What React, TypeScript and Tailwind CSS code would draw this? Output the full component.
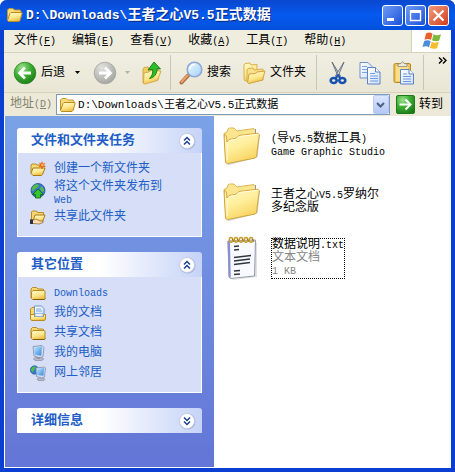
import { useState, type ReactNode } from 'react'

const PATH = 'D:\\Downloads\\王者之心V5.5正式数据'

const menus = [
  { label: '文件', key: 'F' },
  { label: '编辑', key: 'E' },
  { label: '查看', key: 'V' },
  { label: '收藏', key: 'A' },
  { label: '工具', key: 'T' },
  { label: '帮助', key: 'H' },
]

// Latin runs are set a little smaller so they take half the width of a Chinese glyph
function Mixed({ text, latin = 'text-[10px]' }: { text: string; latin?: string }) {
  return (
    <>
      {text.split(/([\x20-\x7e]+)/).filter(Boolean).map((run, i) =>
        /^[\x20-\x7e]+$/.test(run) ? <span key={i} className={latin}>{run}</span> : run
      )}
    </>
  )
}

function Gradients() {
  return (
    <svg width="0" height="0" className="absolute" aria-hidden="true">
      <defs>
        <linearGradient id="folder" x1="0" y1="0" x2="0.4" y2="1">
          <stop offset="0" stopColor="#fffbd0" />
          <stop offset="0.6" stopColor="#fde88c" />
          <stop offset="1" stopColor="#eec048" />
        </linearGradient>
        <linearGradient id="bigFolder" x1="0" y1="0" x2="0.5" y2="1">
          <stop offset="0" stopColor="#fff6b8" />
          <stop offset="0.5" stopColor="#ffef9e" />
          <stop offset="1" stopColor="#f8d460" />
        </linearGradient>
        <radialGradient id="green" cx="0.35" cy="0.25" r="0.8">
          <stop offset="0" stopColor="#9be08c" />
          <stop offset="0.5" stopColor="#3fae34" />
          <stop offset="1" stopColor="#1b7d18" />
        </radialGradient>
        <radialGradient id="gray" cx="0.35" cy="0.25" r="0.8">
          <stop offset="0" stopColor="#e2e2df" />
          <stop offset="1" stopColor="#a3a3a0" />
        </radialGradient>
        <linearGradient id="lens" x1="0" y1="0" x2="1" y2="1">
          <stop offset="0" stopColor="#f2fbff" />
          <stop offset="1" stopColor="#9fd0f5" />
        </linearGradient>
        <linearGradient id="screen" x1="0" y1="0" x2="1" y2="1">
          <stop offset="0" stopColor="#bfeaff" />
          <stop offset="1" stopColor="#2f86e0" />
        </linearGradient>
        <linearGradient id="paper" x1="0" y1="0" x2="1" y2="1">
          <stop offset="0" stopColor="#ffffff" />
          <stop offset="1" stopColor="#cfdffa" />
        </linearGradient>
      </defs>
    </svg>
  )
}

function SmallFolder() {
  return (
    <svg width="16" height="16" viewBox="0 0 16 16" className="shrink-0">
      <path d="M1 13V4l1.500-1.500h4L8 4h5l1 1v3" fill="#f6d873" stroke="#b98a1e" />
      <path d="M1.500 13.500V7L3 5.500h11l1 1v7l-1 1H2.500z" fill="url(#folder)" stroke="#b98a1e" />
      <path d="M3 14.500h11.500l1-1" fill="none" stroke="#7d5c12" />
    </svg>
  )
}

// Larger folder of the title and address bars
function PathFolder() {
  return (
    <svg width="17" height="16" viewBox="0 0 17 16" className="shrink-0">
      <path d="M1.500 13V3L3 1.500h4L8.500 3H14l1 1.500V7" fill="#f8dc7a" stroke="#c3962c" />
      <path d="M1.500 13.500 4 6.500 5 5.500h11V7l-2 6.500-1 1H2.500z" fill="url(#folder)" stroke="#b98a1e" />
    </svg>
  )
}

function NewFolderIcon() {
  return (
    <svg width="16" height="16" viewBox="0 0 16 16" className="shrink-0">
      <path d="M1 12V4l1-1h4l1 1h5v3" fill="#f6d873" stroke="#b98a1e" />
      <path d="M1 12.500 3 7h12l-2.500 6.500-1 1H3z" fill="url(#folder)" stroke="#a87a18" />
      <path d="M12 0l1 2.500L15.500 2 14 4l2 2-2.500 0L12 8.500 11 6 8.500 6 10 4 9 1.500l2 1z" fill="#f0641e" />
      <circle cx="12.300" cy="4" r="1.300" fill="#ffc04a" />
    </svg>
  )
}

function PublishIcon() {
  return (
    <svg width="16" height="16" viewBox="0 0 16 16" className="mt-0.5 shrink-0">
      <circle cx="8" cy="7.500" r="7" fill="#3a78d0" stroke="#1c4c90" strokeWidth="0.800" />
      <path d="M3 3c2-2 5-2 6-1L8 4 5 6 3 8 1.300 7zM11 3c2 1 3 3 3 5l-2 1-2-3z" fill="#58ba48" />
      <path d="M8 6l5.500 5.500h-3V15h-5v-3.500h-3z" fill="#35c52f" stroke="#126d12" strokeWidth="0.900" />
    </svg>
  )
}

function ShareIcon() {
  return (
    <svg width="16" height="16" viewBox="0 0 16 16" className="shrink-0">
      <path d="M1.500 12V3l1-1h4l1 1.500h6V7" fill="#f6d873" stroke="#b98a1e" />
      <path d="M3 12 5 6h10l-2.500 7H4z" fill="url(#folder)" stroke="#a87a18" />
      <path d="M0 11h4l2-1 4 2 3 0v1.500L9 15 4 14.500H0z" fill="#ffe0b0" stroke="#8a5a20" strokeWidth="0.700" />
      <path d="M0 10.500h3V15H0z" fill="#2c3440" />
    </svg>
  )
}

function MyDocsIcon() {
  return (
    <svg width="16" height="16" viewBox="0 0 16 16" className="shrink-0">
      <path d="M.5 14V4L2 2.500h3V14" fill="#f6d873" stroke="#b98a1e" />
      <path d="M4.500 1h7L14 3.500v7H4.500z" fill="url(#paper)" stroke="#6f93c4" />
      <path d="M6 4h5M6 6h6" stroke="#7fa8dd" />
      <path d="M.500 14V9.500h4v2h9v-2h2V14l-1 1.500h-13z" fill="url(#folder)" stroke="#b98a1e" />
      <path d="M5 8.500h8v3H5z" fill="#e8f2ff" stroke="#7fa8dd" strokeWidth="0.700" />
    </svg>
  )
}

function ComputerIcon() {
  return (
    <svg width="16" height="16" viewBox="0 0 16 16" className="shrink-0">
      <ellipse cx="8.500" cy="14" rx="5" ry="1.700" fill="#b9bccb" stroke="#777c92" strokeWidth="0.600" />
      <path d="M3 1.500 12 .5l2 2-1 9-3 1.500-6-2z" fill="#d5dbea" stroke="#7d8cab" strokeWidth="0.800" />
      <path d="M4 2.500 12 1.500l-.8 9.200-6.500-1z" fill="url(#screen)" />
      <path d="M7 12h3v2H7z" fill="#8e96ad" />
    </svg>
  )
}

function NetworkIcon() {
  return (
    <svg width="16" height="16" viewBox="0 0 16 16" className="shrink-0">
      <circle cx="4.500" cy="5" r="4.200" fill="#3478d0" stroke="#1e5090" strokeWidth="0.600" />
      <path d="M2 2.500c1.500-1.500 4-1 4-1L4 5 2.500 7.500 1 5z" fill="#4fc13f" />
      <ellipse cx="11" cy="14.300" rx="4" ry="1.400" fill="#b9bccb" stroke="#777c92" strokeWidth="0.600" />
      <path d="M6 3 14.500 2l1 1-1 9-3 1-5-1.500z" fill="#d5dbea" stroke="#7d8cab" strokeWidth="0.800" />
      <path d="M6.800 3.800 14.200 3l-.8 7.700-6-.8z" fill="url(#screen)" />
    </svg>
  )
}

function BigFolder() {
  return (
    <svg width="38" height="38" viewBox="0 0 38 38" className="shrink-0">
      <path d="M3 37 32 30l3.500-23 1.500 1-2.500 22.500L6 38z" fill="#000" opacity="0.180" />
      <path d="M1 6.500 4 5l1-3 1.500-1H11l3 3 17-2.500 1.500 1.500v25L3 35z" fill="#fbe58f" stroke="#d9b04c" strokeWidth="0.900" />
      <path d="M32.500 2v4.500" stroke="#8d97ab" />
      <path d="M2.500 35.500 1.300 13.500V7l2 2 .700 6L6 12.500l7-1.300 3-2.700L35 6.200l1.300 1.300-2.800 22-1.500 1.500L4.500 36.500z" fill="url(#bigFolder)" stroke="#cf9e34" strokeWidth="0.900" />
      <path d="M4.200 33V16l2-2.500 7-1.300 3-2.700 18-2.200" fill="none" stroke="#fffde4" strokeWidth="0.900" />
    </svg>
  )
}

function NotepadIcon() {
  const rings = [7, 12, 17, 22, 27]
  return (
    <svg width="38" height="44" viewBox="0 0 38 44" className="shrink-0">
      <path d="M8 43.500 32 40V6l2 1v34L10 44z" fill="#000" opacity="0.120" />
      <path d="M5 5 32.500 4 31.500 40 7.500 42.500 6 41z" fill="#f8faff" stroke="#8790a4" strokeWidth="0.900" />
      <path d="M4.500 5 7 6l.8 36-2-1.500z" fill="#8b8fd0" />
      {rings.map((x) => (
        <g key={x} fill="none">
          <ellipse cx={x + 1} cy="3.800" rx="1.700" ry="2.400" stroke="#c69c2c" strokeWidth="1.500" />
          <path d={`M${x + 2.500} 3l1.500 3`} stroke="#80631c" strokeWidth="0.900" />
        </g>
      ))}
      <path d="M11 10.500l5-.5M11 14l5-.5M11 21.500l17-2M11 25l16-2M11 28.500l16-2M11 35l6-.5M11 38.500l6-.5" fill="none" stroke="#30363e" strokeWidth="1.300" />
    </svg>
  )
}

function RoundArrow({ back = false }: { back?: boolean }) {
  return (
    <svg width="24" height="24" viewBox="0 0 24 24" className="shrink-0">
      <circle cx="12" cy="12" r="10.800" fill={back ? 'url(#green)' : 'url(#gray)'} stroke={back ? '#2a8423' : '#a4a49f'} strokeWidth="0.800" />
      <path d={back ? 'M18 12H7M12 6.500 6.500 12l5.500 5.500' : 'M6 12h11M12 6.500l5.500 5.500-5.500 5.500'} fill="none" stroke="#fff" strokeWidth="2.800" />
    </svg>
  )
}

function UpIcon() {
  return (
    <svg width="20" height="24" viewBox="0 0 20 24" className="shrink-0">
      <path d="M1 22V8l1-1.500 4-.5 1 1.500 9-1v12L2 22z" fill="#f0cc62" stroke="#d0a443" strokeWidth="0.900" />
      <path d="M1.500 22.500 2 12l5-1 2-1.500L19 10l-3.500 9.500L3 23z" fill="url(#folder)" stroke="#d0a443" strokeWidth="0.900" />
      <path d="M12 1l6.500 7-3.500-.3C15 13 12.500 16.500 7.500 17.500 10.500 14.500 11 12 10.700 8.500L6 9z" fill="#2ebd2b" stroke="#12780f" strokeWidth="0.900" />
    </svg>
  )
}

function SearchIcon() {
  return (
    <svg width="24" height="24" viewBox="0 0 24 24" className="shrink-0">
      <path d="M2.500 21.500 9 14.500" stroke="#a9683e" strokeWidth="4" strokeLinecap="round" />
      <path d="M2.500 21 8.500 14.500" stroke="#eda468" strokeWidth="2" strokeLinecap="round" />
      <circle cx="15.500" cy="8.500" r="7.300" fill="url(#lens)" stroke="#8fa8da" strokeWidth="1.600" />
      <path d="M11 8c0-3 2-4.500 4.500-4.500" fill="none" stroke="#fff" strokeWidth="1.600" />
    </svg>
  )
}

function FoldersIcon() {
  return (
    <svg width="23" height="22" viewBox="0 0 23 22" className="shrink-0">
      <path d="M1 17V3l1-1.500 5-.5 1 2 6-.5V16L2 19z" fill="url(#folder)" stroke="#d9b04c" />
      <path d="M4 20V8l1-1.500 5-.5 1 2 9-1v11L6 21z" fill="#f9e08a" stroke="#d9b04c" />
      <path d="M4.500 20.500 6 12l6-.5 2-1.500 8-1-2.500 9L6 21.500z" fill="url(#folder)" stroke="#d0a443" />
    </svg>
  )
}

function CutIcon() {
  return (
    <svg width="18" height="24" viewBox="0 0 18 24">
      <path d="M3 1l8.500 14-2 1.500z" fill="#c5ced8" stroke="#5d6876" strokeWidth="0.900" />
      <path d="M15 1 6.500 15l2 1.500z" fill="#eef2f7" stroke="#5d6876" strokeWidth="0.900" />
      <ellipse cx="4.700" cy="19.500" rx="3" ry="2.500" fill="none" stroke="#1750ae" strokeWidth="2.600" />
      <ellipse cx="13.300" cy="19.500" rx="3" ry="2.500" fill="none" stroke="#1750ae" strokeWidth="2.600" />
      <path d="M6.500 17 9 14l2.500 3" fill="none" stroke="#1750ae" strokeWidth="1.800" />
    </svg>
  )
}

function CopyIcon() {
  return (
    <svg width="22" height="24" viewBox="0 0 22 24">
      <path d="M1 1.500h8l4 4V17H1z" fill="url(#paper)" stroke="#6c8fce" />
      <path d="M3 5.500h5M3 8.500h5M3 11.500h5" stroke="#7aa4e4" />
      <path d="M8.500 6.500h8l4.500 4.500v12H8.500z" fill="url(#paper)" stroke="#5d82c6" />
      <path d="M16.500 6.500V11H21" fill="#fff" stroke="#5d82c6" />
      <path d="M11 12.500h5M11 15h8M11 17.500h8M11 20h8" stroke="#6b9ae2" />
    </svg>
  )
}

function PasteIcon() {
  return (
    <svg width="22" height="24" viewBox="0 0 22 24">
      <rect x="1" y="2.500" width="16.500" height="19" rx="1.500" fill="#efc657" stroke="#b58726" />
      <path d="M3 5h12v15H3z" fill="#f9df8b" />
      <path d="M5 5.500V3l3-.5 1.500-2 1.500 2 3 .5v2.500z" fill="#eeeade" stroke="#8e8a7a" strokeWidth="0.800" />
      <path d="M7.500 8.500H16l4.500 4.500v10h-13z" fill="url(#paper)" stroke="#5d82c6" />
      <path d="M16 8.500V13h4.500" fill="#fff" stroke="#5d82c6" />
      <path d="M10 13h4M10 15.500h8M10 18h8M10 20.500h8" stroke="#6b9ae2" />
    </svg>
  )
}

function WindowsFlag() {
  return (
    <svg width="20" height="20" viewBox="0 0 20 20">
      <path d="M4 2.500c2.500-1.500 4.500-1 6.500.2L9 9C7 7.800 5 7.700 2.500 8.800z" fill="#e8602c" />
      <path d="M11.500 3.300c2.300 1.300 4.500 1.300 7.500 0l-1.800 6.200c-2.700 1.200-5 1-7.200-.2z" fill="#7dba3c" />
      <path d="M2.200 10C4.700 8.800 6.700 9 8.700 10.200l-1.700 6C5 15 3 14.900.5 16z" fill="#4b8ddb" />
      <path d="M9.700 10.700c2.300 1.300 4.500 1.200 7.200.1L15.200 17c-2.700 1.200-5 1.100-7.200-.2z" fill="#f5bd2b" />
    </svg>
  )
}

function Caret({ color }: { color: string }) {
  return (
    <svg width="5" height="3" viewBox="0 0 5 3">
      <path d="M0 0h5L2.500 3z" fill={color} />
    </svg>
  )
}

function Separator() {
  return <div className="h-[35px] w-px shrink-0 bg-[#c9c6b4]" />
}

function TaskPanel({ title, open: initial, children }: { title: string; open: boolean; children?: ReactNode }) {
  const [open, setOpen] = useState(initial)
  return (
    <section>
      <button
        aria-expanded={open}
        onClick={() => setOpen(!open)}
        className="flex h-[25px] w-full items-center justify-between rounded-t-[3px] bg-linear-to-r from-white from-45% to-[#c6d3f7] pr-1.5 pl-3.5 text-[13px] font-bold text-[#215dc6]"
      >
        {title}
        <svg width="18" height="18" viewBox="0 0 18 18">
          <circle cx="9.500" cy="9.500" r="8" fill="#7f90c4" opacity="0.500" />
          <circle cx="9" cy="9" r="7.500" fill="#fff" stroke="#c0c9e2" strokeWidth="0.800" />
          <path
            d={open ? 'M6 8.500l3-3 3 3M6 12.500l3-3 3 3' : 'M6 5.500l3 3 3-3M6 9.500l3 3 3-3'}
            fill="none"
            stroke="#1c3f8f"
            strokeWidth="1.500"
          />
        </svg>
      </button>
      {open && children && (
        <ul className="flex flex-col gap-1 border border-t-0 border-white bg-[#d6dff7] pt-2 pb-[11px] pl-3 text-[12px] text-[#215dc6]">
          {children}
        </ul>
      )}
    </section>
  )
}

function TaskLink({ icon, text }: { icon: ReactNode; text: string }) {
  return (
    <li>
      <a href="#" className="flex h-4 gap-2 leading-4 hover:underline">
        {icon}
        <span><Mixed text={text} /></span>
      </a>
    </li>
  )
}

export default function App() {
  const [address, setAddress] = useState(PATH)

  return (
    <div className="flex min-h-screen flex-col rounded-t-[7px] border-r-4 border-b-4 border-l-4 border-[#0a3fd2] bg-white font-['Liberation_Mono','Noto_Sans_CJK_SC',monospace] text-[12px] text-black">
      <Gradients />

      {/* Title bar */}
      <header className="-mx-1 flex h-[30px] items-center rounded-t-[7px] bg-linear-to-b from-[#0a48cf] via-[#0559ee] to-[#0450dc] px-1.5">
        <PathFolder />
        <h1 className="ml-[3px] flex-1 truncate text-[14px] leading-5 font-bold text-white [text-shadow:1px_1px_#0a2a80]">
          <Mixed text={PATH} latin="text-[13px]" />
        </h1>
        <div className="flex gap-0.5">
          <button aria-label="最小化" className="h-[21px] w-[21px] rounded-[3px] border border-white bg-linear-to-br from-[#6f9bf5] to-[#1c4fd8]">
            <svg width="19" height="19" viewBox="0 0 19 19"><path d="M4 12h7v3H4z" fill="#fff" /></svg>
          </button>
          <button aria-label="最大化" className="h-[21px] w-[21px] rounded-[3px] border border-white bg-linear-to-br from-[#6f9bf5] to-[#1c4fd8]">
            <svg width="19" height="19" viewBox="0 0 19 19"><path d="M4.500 5h10v9.500h-10zM4 5.500h11" fill="none" stroke="#fff" strokeWidth="1.400" /><path d="M4 4h11v3H4z" fill="#fff" /></svg>
          </button>
          <button aria-label="关闭" className="h-[21px] w-[21px] rounded-[3px] border border-white bg-linear-to-br from-[#f09a7c] to-[#cf3a14]">
            <svg width="19" height="19" viewBox="0 0 19 19"><path d="M4.500 4.500l10 10M14.500 4.500l-10 10" stroke="#fff" strokeWidth="2.200" /></svg>
          </button>
        </div>
      </header>

      {/* Menu bar */}
      <nav className="flex h-[23px] items-stretch border-b border-[#d8d2bd] bg-[#efedde] pl-[10px]">
        <div className="flex flex-1 items-center gap-4">
          {menus.map((menu) => (
            <button key={menu.key} className="leading-4 whitespace-nowrap">
              {menu.label}
              <span className="text-[10px]">(<u>{menu.key}</u>)</span>
            </button>
          ))}
        </div>
        <div className="flex w-10 items-center justify-center border-l border-[#d8d2bd] bg-white">
          <WindowsFlag />
        </div>
      </nav>

      {/* Toolbar */}
      <div className="flex h-10 items-center border-b border-[#d8d2bd] bg-linear-to-b from-[#f1efe3] to-[#e9e6d5] pl-[9px]">
        <button className="flex shrink-0 items-center gap-1 leading-4"><RoundArrow back />后退</button>
        <button aria-label="后退历史" className="ml-2.5 flex"><Caret color="#000" /></button>
        <button aria-label="前进" className="ml-[13px] shrink-0"><RoundArrow /></button>
        <button aria-label="前进历史" className="ml-2 flex"><Caret color="#b5b2a2" /></button>
        <button aria-label="向上" className="mr-2 ml-3 shrink-0"><UpIcon /></button>
        <Separator />
        <button className="ml-2 flex shrink-0 items-center gap-1 leading-4"><SearchIcon />搜索</button>
        <button className="mr-2.5 ml-3 flex shrink-0 items-center gap-1 leading-4"><FoldersIcon />文件夹</button>
        <Separator />
        <div className="mr-2 ml-3 flex shrink-0 gap-3">
          <button aria-label="剪切"><CutIcon /></button>
          <button aria-label="复制"><CopyIcon /></button>
          <button aria-label="粘贴"><PasteIcon /></button>
        </div>
        <Separator />
        <button aria-label="更多按钮" className="ml-auto self-start p-1">
          <svg width="9" height="7" viewBox="0 0 9 7">
            <path d="M1 .5l3 3-3 3M5 .5l3 3-3 3" fill="none" stroke="#000" strokeWidth="1.400" />
          </svg>
        </button>
      </div>

      {/* Address bar */}
      <div className="flex h-[23px] items-center bg-[#ece9d8] pr-2 pl-1.5">
        <label htmlFor="address" className="leading-4 whitespace-nowrap text-[#85836f]">
          地址<span className="text-[10px]">(<u>D</u>)</span>
        </label>
        <div className="ml-1 flex h-[21px] flex-1 items-center border border-[#7f9db9] bg-white pl-0.5">
          <PathFolder />
          <input
            id="address"
            value={address}
            onChange={(e) => setAddress(e.target.value)}
            className="ml-0.5 w-0 flex-1 text-[11px] leading-4 outline-none"
          />
          <button aria-label="展开地址列表" className="flex h-[19px] w-4 items-center justify-center rounded-xs border border-[#b7caf5] bg-linear-to-b from-[#dbe5fd] to-[#b4c8f6]">
            <svg width="9" height="6" viewBox="0 0 9 6"><path d="M1 1l3.500 3.500L8 1" fill="none" stroke="#4d6185" strokeWidth="2" /></svg>
          </button>
        </div>
        <button className="ml-1.5 flex items-center gap-1 leading-4">
          <svg width="19" height="19" viewBox="0 0 19 19">
            <rect x="0.500" y="0.500" width="18" height="18" rx="1.500" fill="url(#green)" stroke="#1d7b19" />
            <path d="M3.500 9.500h11M9.500 4.500l5 5-5 5" fill="none" stroke="#fff" strokeWidth="2" />
          </svg>
          转到
        </button>
      </div>

      <main className="flex flex-1 border-b border-l border-white">
        {/* Task pane */}
        <aside className="flex w-[209px] shrink-0 flex-col gap-[15px] bg-linear-to-b from-[#7ba2e7] to-[#6375d6] px-3 pt-3">
          <TaskPanel title="文件和文件夹任务" open>
            <TaskLink icon={<NewFolderIcon />} text="创建一个新文件夹" />
            <li>
              <a href="#" className="flex h-6 gap-2 leading-[13px] hover:underline">
                <PublishIcon />
                <span>将这个文件夹发布到<br /><span className="text-[10px]">Web</span></span>
              </a>
            </li>
            <TaskLink icon={<ShareIcon />} text="共享此文件夹" />
          </TaskPanel>
          <TaskPanel title="其它位置" open>
            <TaskLink icon={<SmallFolder />} text="Downloads" />
            <TaskLink icon={<MyDocsIcon />} text="我的文档" />
            <TaskLink icon={<SmallFolder />} text="共享文档" />
            <TaskLink icon={<ComputerIcon />} text="我的电脑" />
            <TaskLink icon={<NetworkIcon />} text="网上邻居" />
          </TaskPanel>
          <TaskPanel title="详细信息" open={false} />
        </aside>

        {/* File list */}
        <ul className="flex flex-1 flex-col gap-2 pt-1.5 pl-[9px] leading-[13px]">
          <li className="flex h-12 items-center gap-2.5">
            <BigFolder />
            <p><Mixed text="(导v5.5数据工具)" /><br /><Mixed text="Game Graphic Studio" /></p>
          </li>
          <li className="flex h-12 items-center gap-2.5">
            <BigFolder />
            <p><Mixed text="王者之心V5.5罗纳尔" /><br />多纪念版</p>
          </li>
          <li className="flex h-12 items-center gap-2.5">
            <NotepadIcon />
            <p className="border border-dotted border-black text-[#858585]">
              <span className="text-black"><Mixed text="数据说明.txt" /></span><br />
              文本文档<br />
              <Mixed text="1 KB" />
            </p>
          </li>
        </ul>
      </main>
    </div>
  )
}
